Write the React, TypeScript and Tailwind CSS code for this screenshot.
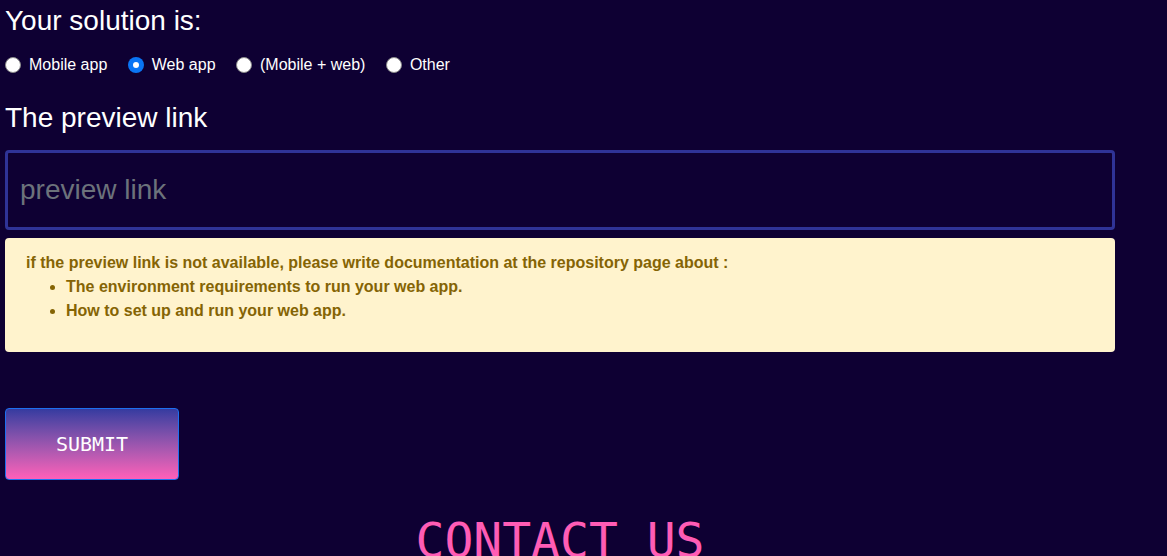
import React from "react";

const options = [
  { label: "Mobile app", checked: false },
  { label: "Web app", checked: true },
  { label: "(Mobile + web)", checked: false },
  { label: "Other", checked: false },
];

function Radio({ checked }: { checked: boolean }) {
  return checked ? (
    <span className="flex h-4 w-4 items-center justify-center rounded-full bg-[#0a75f5]">
      <span className="h-[6px] w-[6px] rounded-full bg-white" />
    </span>
  ) : (
    <span className="h-4 w-4 rounded-full border border-[#8a8a8a] bg-white" />
  );
}

export default function App() {
  return (
    <div className="min-h-screen overflow-hidden bg-[#0e0033] font-['Liberation_Sans',Arial,sans-serif] text-white">
      <div className="ml-[5px] w-[1110px] pt-[5px]">
        <h2 className="text-[28px] leading-[32px] font-normal">Your solution is:</h2>
        <div className="mt-4 flex h-6 items-center gap-[20.5px] text-[16px] leading-6">
          {options.map((o) => (
            <label key={o.label} className="flex items-center gap-2">
              <Radio checked={o.checked} />
              <span>{o.label}</span>
            </label>
          ))}
        </div>
        <h2 className="mt-[25px] text-[28px] leading-[32px] font-normal">The preview link</h2>
        <input
          readOnly
          placeholder="preview link"
          className="mt-[16px] box-border block h-[80px] w-full rounded-[4px] border-[3px] border-[#2f3397] bg-transparent px-3 text-[28px] text-white outline-none placeholder:text-[#6c727b]"
        />
        <div className="mt-2 rounded-[4px] bg-[#fff3cd] pl-[21px] pr-5 pt-[13px] pb-[13px] text-[16px] leading-6 font-bold text-[#856404]">
          <p>if the preview link is not available, please write documentation at the repository page about :</p>
          <ul className="mb-4 list-disc pl-10">
            <li>The environment requirements to run your web app.</li>
            <li>How to set up and run your web app.</li>
          </ul>
        </div>
        <button className="mt-[56px] flex h-[72px] w-[174px] items-center justify-center rounded-[4px] border border-[#1d6ff0] bg-gradient-to-b from-[#353ba0] to-[#ff5fb8] font-['DejaVu_Sans_Mono',monospace] text-[20px] text-white">
          SUBMIT
        </button>
        <h2 className="mt-[36px] text-center font-['DejaVu_Sans_Mono',monospace] text-[48px] leading-[48px] font-normal text-[#ff5cb5]">
          CONTACT US
        </h2>
      </div>
    </div>
  );
}
